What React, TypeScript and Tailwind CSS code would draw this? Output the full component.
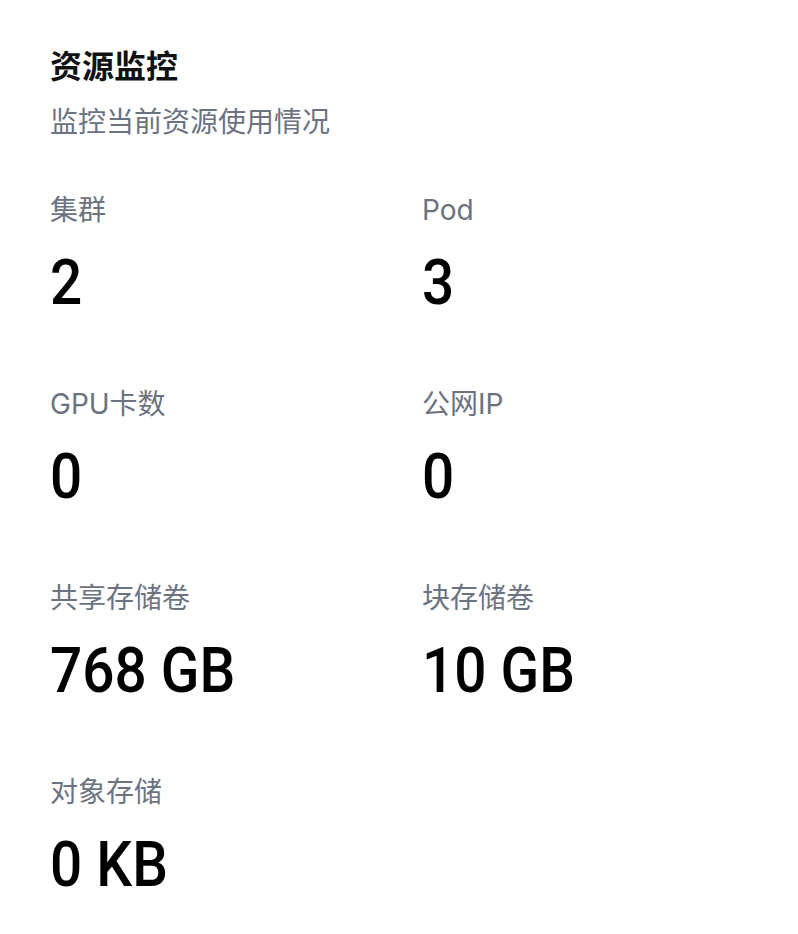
const stats = [
  { label: "集群", value: "2" },
  { label: "Pod", value: "3" },
  { label: "GPU卡数", value: "0" },
  { label: "公网IP", value: "0" },
  { label: "共享存储卷", value: "768 GB" },
  { label: "块存储卷", value: "10 GB" },
  { label: "对象存储", value: "0 KB" },
];

export default function App() {
  return (
    <div
      className="min-h-[934px] bg-white pl-[50px] pr-[52px] pt-[43px]"
      style={{ fontFamily: '"Inter", "Noto Sans CJK SC", sans-serif' }}
    >
      <h1 className="text-[32px] font-semibold leading-[48px] text-[#111]">资源监控</h1>
      <p className="mt-[11px] text-[28px] leading-[40px] text-[#6b7280]">监控当前资源使用情况</p>

      <div className="mt-[48px] grid grid-cols-2 gap-x-[48px] gap-y-[65px]">
        {stats.map((s) => (
          <div key={s.label}>
            <div className="text-[28px] leading-[40px] text-[#6b7280]">{s.label}</div>
            <div
              className="mt-[17px] origin-left scale-x-[0.9] whitespace-nowrap text-[63px] font-medium leading-[72px] text-black"
              style={{ fontFamily: '"Roboto", "Liberation Sans", sans-serif' }}
            >
              {s.value}
            </div>
          </div>
        ))}
      </div>
    </div>
  );
}
